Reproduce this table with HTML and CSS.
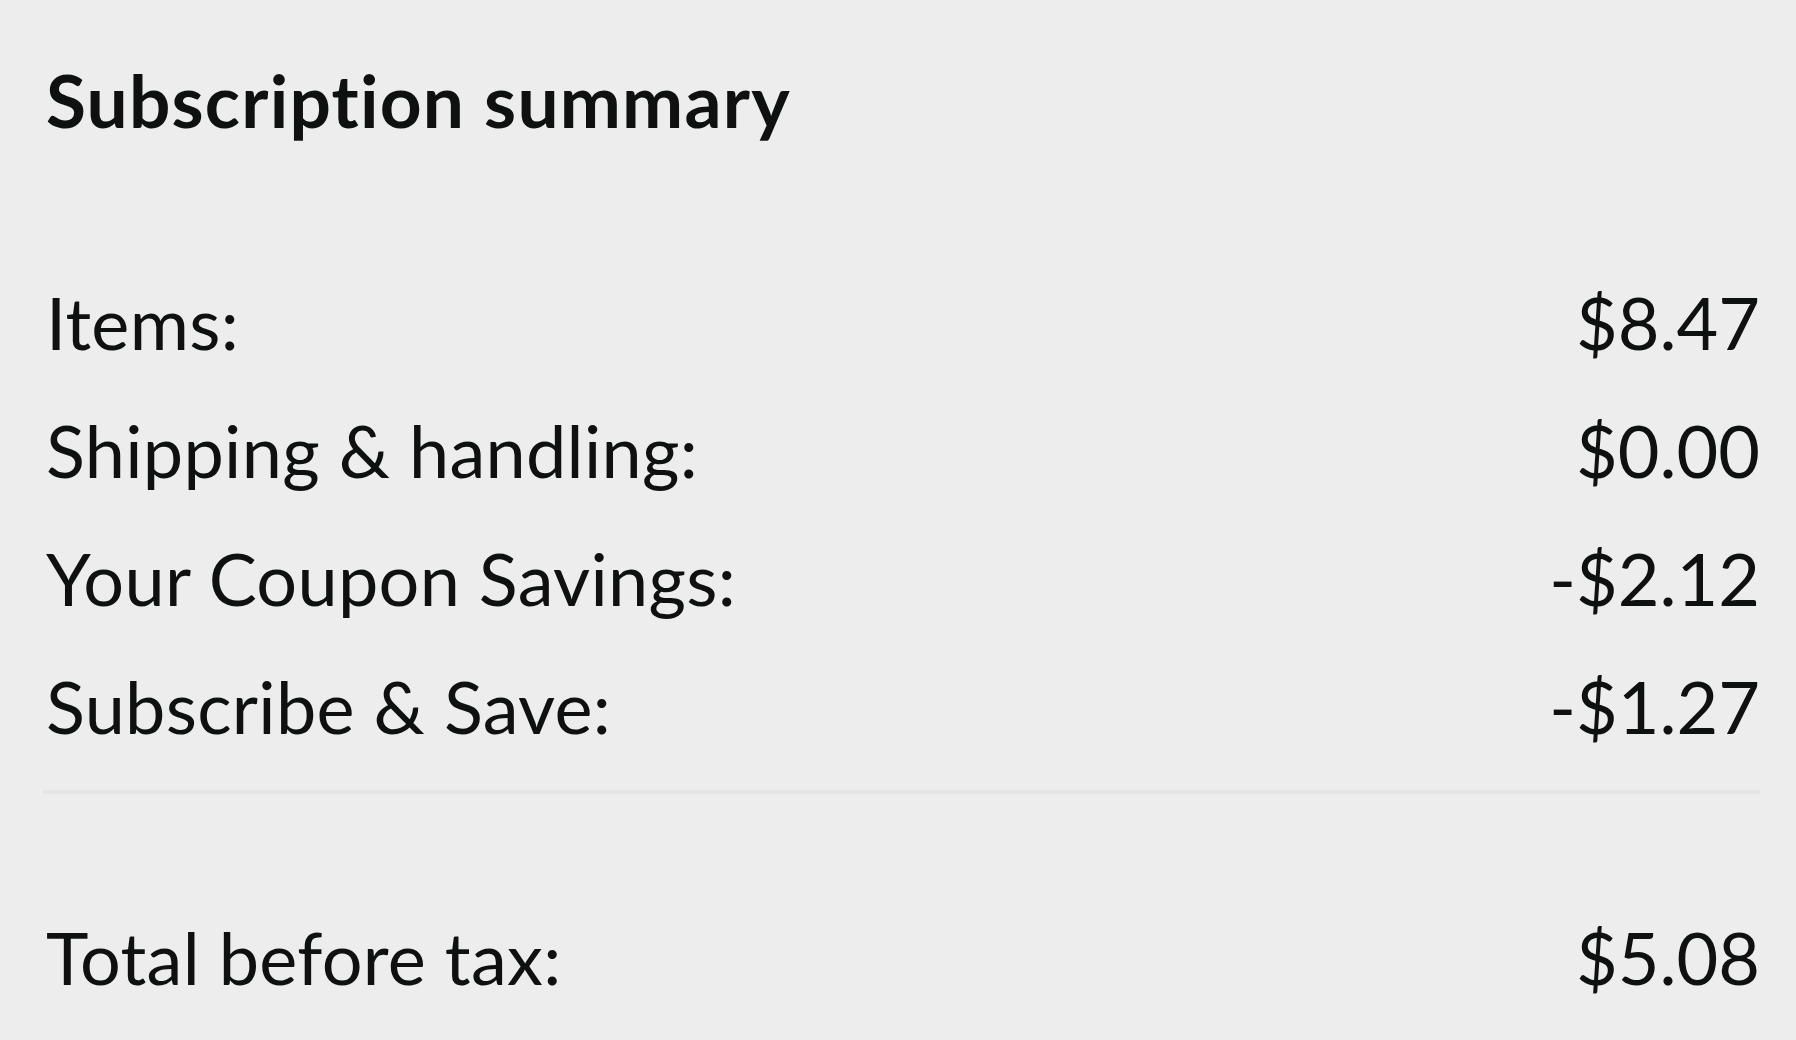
FILE: index.html
```html
<!DOCTYPE html>
<html lang="en">
<head>
<meta charset="utf-8">
<title>Subscription summary</title>
<link rel="stylesheet" href="styles.css">
</head>
<body>
<main class="summary">
  <h1 class="summary-title">Subscription summary</h1>
  <div class="lines">
    <div class="line"><span class="label">Items:</span><span class="amount">$8.47</span></div>
    <div class="line"><span class="label">Shipping &amp; handling:</span><span class="amount">$0.00</span></div>
    <div class="line"><span class="label">Your Coupon Savings:</span><span class="amount">-$2.12</span></div>
    <div class="line"><span class="label">Subscribe &amp; Save:</span><span class="amount">-$1.27</span></div>
  </div>
  <hr class="divider">
  <div class="line total"><span class="label">Total before tax:</span><span class="amount">$5.08</span></div>
</main>
</body>
</html>
```

FILE: styles.css
```css
html, body {
  margin: 0;
  padding: 0;
  background: #ededed;
}

body {
  font-family: Lato, "Noto Sans", "Liberation Sans", sans-serif;
  color: #0f1111;
  font-variant-ligatures: none;
  font-feature-settings: "liga" 0, "clig" 0;
}

.summary {
  padding: 56px 36px 0 40px;
}

.summary-title {
  margin: 0;
  font-size: 73px;
  line-height: 88px;
  font-weight: 700;
  letter-spacing: 1.2px;
  padding-left: 6px;
}

.lines {
  margin-top: 114px;
}

.line {
  display: flex;
  justify-content: space-between;
  align-items: baseline;
  font-size: 72px;
  line-height: 128px;
  height: 128px;
  padding-left: 6px;
  letter-spacing: 0.3px;
}

.amount {
  letter-spacing: 0;
}

.divider {
  margin: 20px 0 0 3px;
  border: 0;
  height: 4px;
  background: #e4e4e4;
}

.total {
  margin-top: 99px;
}
```
